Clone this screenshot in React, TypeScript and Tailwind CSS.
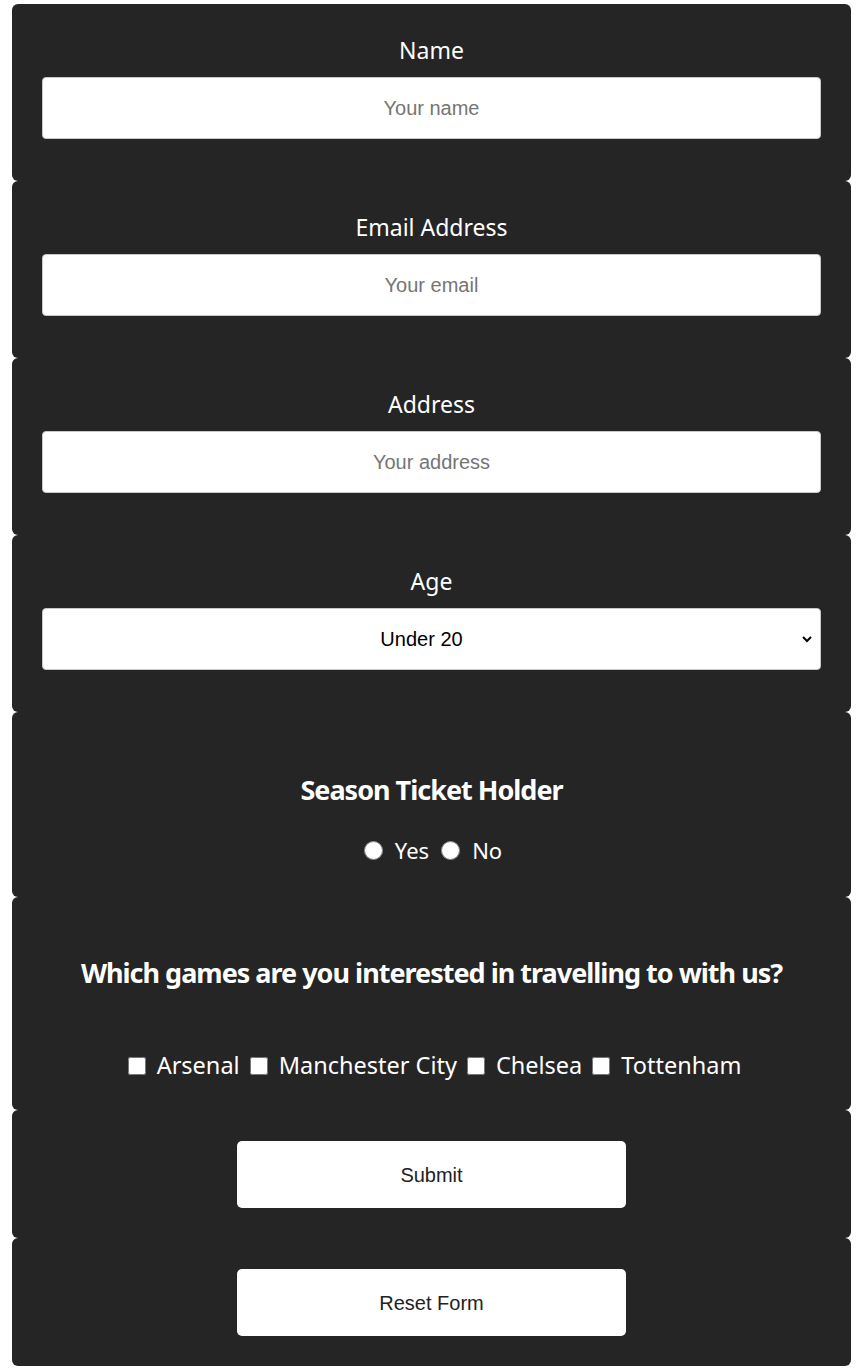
import React from "react";

const heading = "font-['Noto_Sans','Open_Sans',sans-serif] text-white";
const field =
	"w-full h-[62px] bg-white rounded-[4px] border border-[#c8c8c8] text-center text-[20px] font-['Liberation_Sans',Arial,sans-serif] text-black placeholder:text-[#757575] outline-none";

function Card({ className, children }: { className: string; children: React.ReactNode }) {
	return (
		<div className={`ml-[12px] w-[839px] bg-[#252525] rounded-[6px] px-[30px] flex flex-col items-center ${className}`}>
			{children}
		</div>
	);
}

function TextField({ label, placeholder }: { label: string; placeholder: string }) {
	return (
		<Card className="h-[177px] pt-[31px]">
			<label className={`${heading} text-[23px] leading-[30px]`}>{label}</label>
			<input type="text" placeholder={placeholder} className={`${field} mt-[12px]`} />
		</Card>
	);
}

export default function App() {
	const teams = ["Arsenal", "Manchester City", "Chelsea", "Tottenham"];
	return (
		<div className="bg-white min-h-[1371px] pt-[4px]">
			<TextField label="Name" placeholder="Your name" />
			<TextField label="Email Address" placeholder="Your email" />
			<TextField label="Address" placeholder="Your address" />
			<Card className="h-[177px] pt-[31px]">
				<label className={`${heading} text-[23px] leading-[30px]`}>Age</label>
				<div className="relative w-full mt-[12px]">
					<select className={`${field} appearance-none pr-[20px]`} defaultValue="u20">
						<option value="u20">Under 20</option>
						<option value="20-40">20 - 40</option>
						<option value="40+">Over 40</option>
					</select>
					<svg
						className="absolute right-[8px] top-[25px] pointer-events-none"
						width="12"
						height="12"
						viewBox="0 0 12 12"
						fill="none"
						stroke="#000"
						strokeWidth="2"
					>
						<path d="M2 4l4 4 4-4" />
					</svg>
				</div>
			</Card>
			<Card className="h-[185px] pt-[58px]">
				<h2 className={`${heading} text-[27px] leading-[40px] font-bold tracking-[-1px]`}>Season Ticket Holder</h2>
				<div className={`${heading} text-[22px] flex items-center mt-[24px] pl-[3px]`}>
					<input type="radio" name="season" className="w-[19px] h-[19px] m-0 mr-[12px] accent-white" />
					<span>Yes</span>
					<input type="radio" name="season" className="w-[19px] h-[19px] m-0 ml-[12px] mr-[12px] accent-white" />
					<span>No</span>
				</div>
			</Card>
			<Card className="h-[213px] pt-[56px]">
				<h2 className={`${heading} text-[27px] leading-[40px] font-bold tracking-[-1px]`}>
					Which games are you interested in travelling to with us?
				</h2>
				<div className={`${heading} text-[23.5px] flex items-center mt-[55px] pl-[6px]`}>
					{teams.map((t, i) => (
						<label key={t} className={`flex items-center ${i > 0 ? "ml-[10px]" : ""}`}>
							<input type="checkbox" className="w-[18px] h-[18px] m-0" />
							<span className="ml-[11px]">{t}</span>
						</label>
					))}
				</div>
			</Card>
			<Card className="h-[128px] pt-[31px]">
				<button
					type="button"
					className="w-[389px] h-[67px] bg-white rounded-[5px] text-[20px] text-[#222] font-['Liberation_Sans',Arial,sans-serif]"
				>
					Submit
				</button>
			</Card>
			<Card className="h-[128px] pt-[31px]">
				<button
					type="reset"
					className="w-[389px] h-[67px] bg-white rounded-[5px] text-[20px] text-[#222] font-['Liberation_Sans',Arial,sans-serif]"
				>
					Reset Form
				</button>
			</Card>
		</div>
	);
}
